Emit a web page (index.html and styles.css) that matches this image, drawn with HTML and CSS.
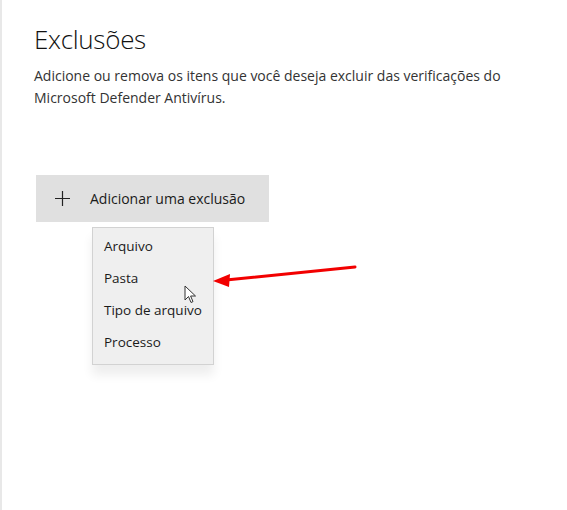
FILE: index.html
```html
<!DOCTYPE html>
<html lang="pt-BR">
<head>
  <meta charset="UTF-8" />
  <title>Exclusões</title>
  <link rel="stylesheet" href="styles.css">
</head>
<body>
  <div class="page">
    <h1>Exclusões</h1>
    <p class="desc">Adicione ou remova os itens que você deseja excluir das verificações do Microsoft Defender Antivírus.</p>

    <div class="add-wrap">
      <button class="add-button">
        <svg class="plus" width="15" height="15" viewBox="0 0 15 15">
          <path d="M7.5 0 V15 M0 7.5 H15" stroke="#222" stroke-width="1.2"/>
        </svg>
        <span>Adicionar uma exclusão</span>
      </button>

      <!-- Menu suspenso -->
      <ul class="menu">
        <li>Arquivo</li>
        <li>Pasta</li>
        <li>Tipo de arquivo</li>
        <li>Processo</li>
      </ul>

      <svg class="cursor" width="14" height="20" viewBox="0 0 14 20">
        <path d="M1 1 L1 15 L4.5 11.5 L7 17.5 L9 16.6 L6.6 11 L11.5 11 Z" fill="#fff" stroke="#333" stroke-width="1" stroke-linejoin="round"/>
      </svg>
    </div>
  </div>

  <!-- Seta vermelha -->
  <svg class="arrow" width="567" height="510" viewBox="0 0 567 510">
    <line x1="355" y1="267" x2="226" y2="280" stroke="#f20000" stroke-width="3" stroke-linecap="round"/>
    <polygon points="213,281 230,274 229,287" fill="#f20000"/>
  </svg>
</body>
</html>
```

FILE: styles.css
```css
* {
  box-sizing: border-box;
  margin: 0;
  padding: 0;
}

body {
  background: #fff;
  color: #1a1a1a;
  font-family: 'Open Sans', 'Noto Sans', sans-serif;
  height: 510px;
  overflow: hidden;
  border-left: 2px solid #e8e8e8;
}

.page {
  padding: 19px 0 0 32px;
}

h1 {
  font-weight: 300;
  font-size: 26px;
  line-height: 40px;
  letter-spacing: -0.3px;
  color: #111;
}

.desc {
  margin-top: 6px;
  font-size: 14px;
  line-height: 22px;
  color: #333;
  width: 500px;
}

.add-wrap {
  position: relative;
  margin-top: 66px;
  margin-left: 2px;
}

.add-button {
  display: flex;
  align-items: center;
  width: 233px;
  height: 47px;
  background: #e0e0e0;
  border: none;
  font-family: inherit;
  font-size: 14px;
  color: #1a1a1a;
  padding-left: 19px;
  gap: 20px;
  text-align: left;
}

.plus {
  flex: none;
}

.menu {
  position: absolute;
  top: 52px;
  left: 56px;
  width: 122px;
  list-style: none;
  background: #efefef;
  border: 1px solid #d2d2d2;
  padding: 2px 0 6px;
  box-shadow: 0 10px 10px rgba(0, 0, 0, 0.07);
  font-size: 13.5px;
  color: #1a1a1a;
}

.menu li {
  height: 32px;
  line-height: 32px;
  padding-left: 11px;
}

.cursor {
  position: absolute;
  top: 110px;
  left: 148px;
}

.arrow {
  position: absolute;
  top: 0;
  left: 0;
  pointer-events: none;
}
```
